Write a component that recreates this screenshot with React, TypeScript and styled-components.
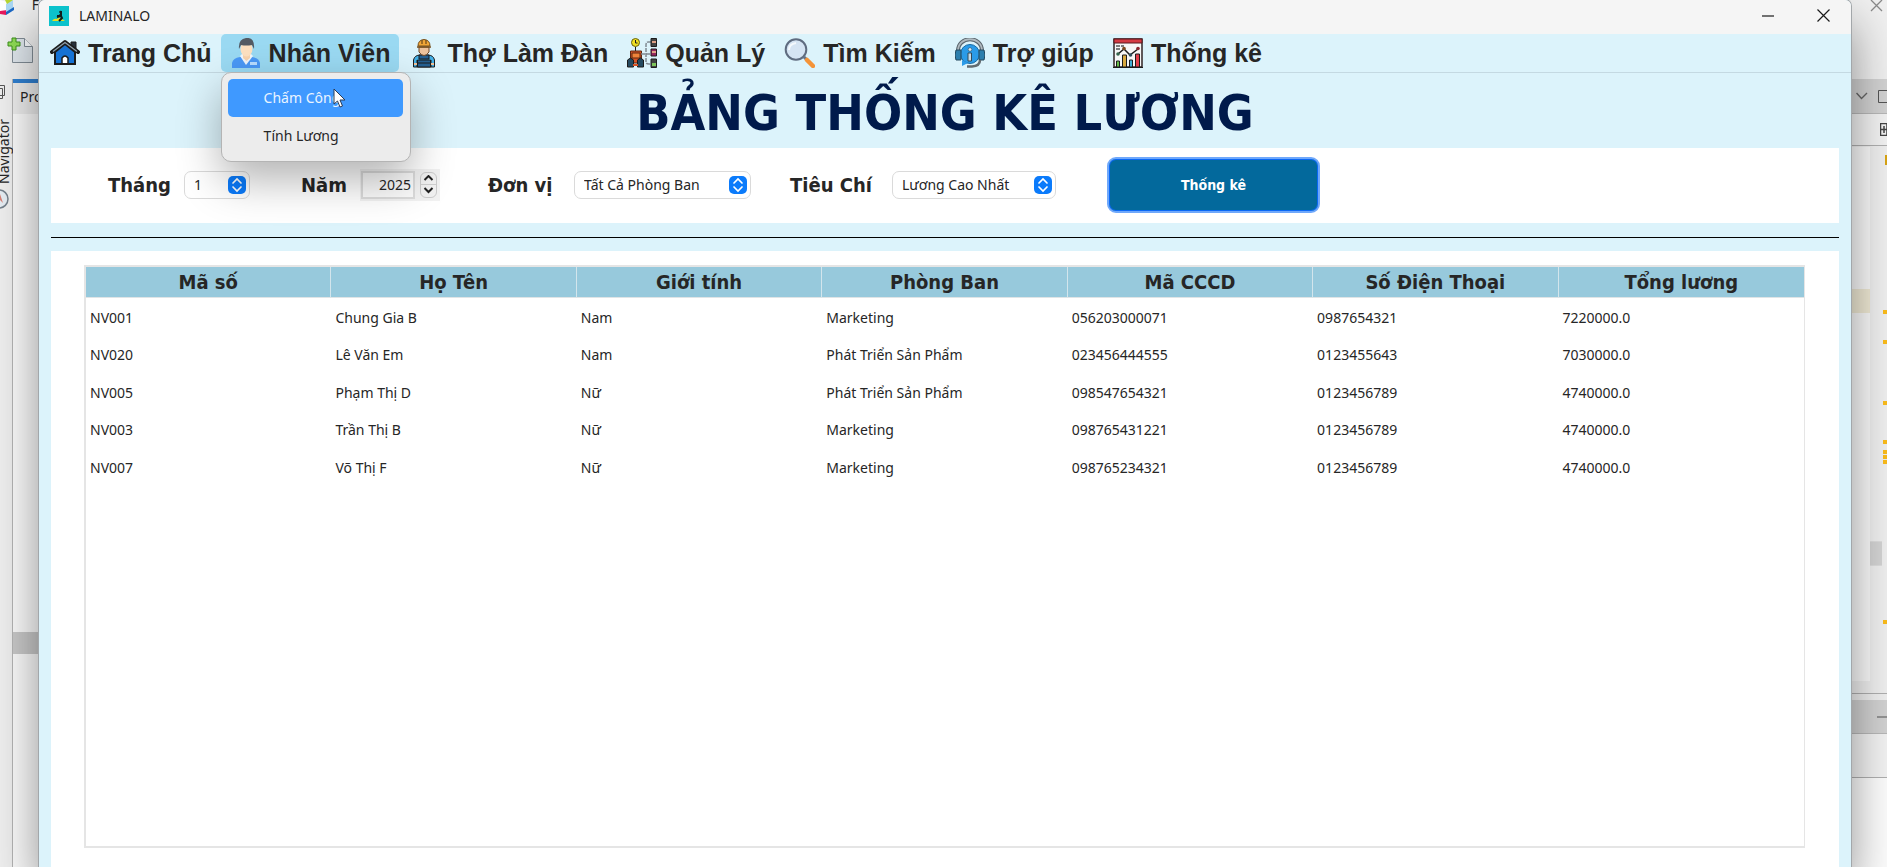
import React from 'react';
import styled, { createGlobalStyle } from 'styled-components';

const UI = `"Noto Sans", "Open Sans", sans-serif`;
const BOLD = `Tahoma, "DejaVu Sans Condensed", "Noto Sans", sans-serif`;
const MENU = `"Liberation Sans", Arial, sans-serif`;

const Global = createGlobalStyle`
  * { box-sizing: border-box; }
  body { margin: 0; background: #ececec; font-family: ${UI}; color: #262626; }
  button, input, select { font: inherit; color: inherit; margin: 0; }
`;

const Desktop = styled.div`
  display: grid;
  grid-template-columns: 39px minmax(0, 1fr) 36px;
  height: 100vh;
  overflow: hidden;
`;

/* ---------- IDE behind the window ---------- */
const LeftPane = styled.aside`
  display: grid;
  grid-template-rows: 79px minmax(0, 1fr);
  min-width: 0;
  background: #efefef;
`;
const IdeToolbar = styled.div`
  display: flex;
  flex-direction: column;
  justify-content: space-between;
  height: 67px;
  white-space: nowrap;
`;
const IdeTop = styled.div`
  display: flex;
  justify-content: space-between;
  height: 16px;
  font-size: 14px;
  line-height: 10px;
`;
const IdeBody = styled.div`
  display: grid;
  grid-template-columns: 12px minmax(0, 1fr);
`;
const Rail = styled.div`
  display: flex;
  flex-direction: column;
  align-items: flex-start;
  padding-top: 6px;
`;
const RailLabel = styled.span`
  writing-mode: vertical-rl;
  transform: rotate(180deg);
  width: 8px;
  height: 67px;
  margin: 18px 0 5px;
  font-size: 14px;
  line-height: 8px;
`;
const Projects = styled.div`
  display: flex;
  flex-direction: column;
  border-left: 1px solid #b4b4b4;
  background: #fbfbfb;
`;
const ProjectsTab = styled.div`
  height: 35px;
  padding-left: 7px;
  border-top: 4px solid #2f7fd0;
  background: #ececec;
  font-size: 14px;
  line-height: 28px;
  white-space: nowrap;
  overflow: hidden;
`;
const ScrollBlock = styled.div`
  height: 22px;
  margin-top: 518px;
  background: #c9c9c9;
`;

const RightPane = styled.aside`
  display: grid;
  grid-template-rows: 79px 35px 32px minmax(0, 1fr) 7px 34px 44px 89px;
  background: #f0f0f0;
`;
const RightTop = styled.div`
  padding-left: 19px;
  overflow: hidden;
  svg { display: block; }
`;
const PaneHeader = styled.div`
  display: flex;
  align-items: center;
  gap: 10px;
  padding-left: 5px;
  overflow: hidden;
  background: #d2d2d2;
  border-bottom: 1px solid #b8b8b8;
  svg { flex: none; }
`;
const PaneTools = styled.div`
  display: flex;
  align-items: center;
  justify-content: flex-end;
  overflow: hidden;
  background: #f3f3f3;
  border-bottom: 1px solid #b0b0b0;
`;
const Editor = styled.div`
  display: grid;
  grid-template-columns: 19px 12px 5px;
  padding-top: 1px;
`;
const EditorText = styled.div`
  margin-bottom: 12px;
  padding-top: 142px;
  background: #fbfbfb;
`;
const CurrentLine = styled.div`
  height: 24px;
  background: #f1ebd6;
`;
const EditorScroll = styled.div`
  padding-top: 394px;
`;
const EditorThumb = styled.div`
  height: 25px;
  background: #d4d4d4;
  border: solid #dedede;
  border-width: 1px 0;
`;
const Stripe = styled.div`
  position: relative;
`;
const Mark = styled.i`
  position: absolute;
  right: 0;
  width: 4px;
  height: 4px;
  background: #fbbc1a;
`;
const StatusMark = styled.i`
  position: absolute;
  right: 0;
  top: 8px;
  width: 2px;
  height: 10px;
  background: #d9a514;
`;
const Gap = styled.div`
  border-top: 1px solid #b0b0b0;
`;
const OutputHeader = styled(PaneHeader)`
  justify-content: flex-end;
`;
const OutputTools = styled(PaneTools)``;
const OutputBody = styled.div`
  background: #fdfdfd;
`;

/* ---------- application window ---------- */
const Window = styled.main`
  position: relative;
  z-index: 1;
  display: flex;
  flex-direction: column;
  min-width: 0;
  background: #dcf3fb;
  border-radius: 6px 6px 0 0;
  box-shadow: 0 0 0 1px #a3a7aa, 0 24px 48px rgba(0, 0, 0, 0.44);
`;
const TitleBar = styled.header`
  display: flex;
  align-items: center;
  gap: 10px;
  height: 34px;
  padding: 0 7px 3px 10px;
  border-radius: 6px 6px 0 0;
  background: #f5f5f5;
  font-size: 14px;
`;
const AppName = styled.span`
  flex: 1;
`;
const WindowButton = styled.button`
  display: grid;
  place-items: center;
  width: 42px;
  height: 30px;
  margin-left: 3px;
  padding: 0;
  border: 0;
  background: none;
`;
const MenuBar = styled.nav`
  display: flex;
  height: 39px;
  padding-left: 1px;
  border-bottom: 1px solid #c4d9e2;
`;
const MenuSlot = styled.div`
  position: relative;
`;
const MenuButton = styled.button<{ $open?: boolean }>`
  display: flex;
  align-items: center;
  gap: 8px;
  height: 38px;
  padding: 0 9px 0 10px;
  border: 0;
  border-radius: 5px;
  background: ${p => (p.$open ? '#9ad9f2' : 'transparent')};
  font-family: ${MENU};
  font-size: 25px;
  font-weight: 700;
  line-height: 28px;
  white-space: nowrap;
  svg { flex: none; }
`;
const Popup = styled.div`
  position: absolute;
  z-index: 2;
  top: 38px;
  left: 0;
  width: 190px;
  height: 90px;
  padding: 6px 7px 6px 6px;
  border: 1px solid #b4b4b4;
  border-radius: 10px;
  background: #ececec;
  box-shadow: 0 18px 44px rgba(0, 0, 0, 0.3);
`;
const PopupItem = styled.button<{ $active?: boolean }>`
  display: block;
  width: 100%;
  height: 38px;
  padding: 0 36px 1px;
  border: 0;
  border-radius: 5px;
  background: ${p => (p.$active ? '#3f99ff' : 'transparent')};
  color: ${p => (p.$active ? '#eaf4ff' : '#262626')};
  font-size: 14px;
  text-align: left;
`;
const Pointer = styled.svg`
  position: absolute;
  left: 111px;
  top: 15px;
`;
const Heading = styled.h1`
  height: 75px;
  margin: 0;
  color: #001a4b;
  font-family: ${BOLD};
  font-size: 50px;
  font-weight: 700;
  line-height: 80px;
  text-align: center;
`;
const Filters = styled.form`
  display: grid;
  grid-template-columns: 193px 187px 302px 317px 213px;
  align-items: center;
  height: 75px;
  margin: 0 12px;
  padding: 0 0 2px 57px;
  background: #fff;
`;
const Field = styled.div<{ $label: number }>`
  display: grid;
  grid-template-columns: ${p => p.$label}px auto;
  justify-content: start;
  align-items: center;
`;
const Label = styled.label`
  font-family: ${BOLD};
  font-size: 20px;
  font-weight: 700;
  line-height: 28px;
  white-space: nowrap;
`;
const SelectBox = styled.div<{ $width: number }>`
  position: relative;
  width: ${p => p.$width}px;
  svg { position: absolute; right: 4px; top: 5px; pointer-events: none; }
`;
const Select = styled.select`
  appearance: none;
  display: block;
  width: 100%;
  height: 28px;
  padding: 0 24px 0 9px;
  border: 1px solid #dadada;
  border-radius: 7px;
  background: transparent;
  font-size: 14px;
`;
const Spinner = styled.div`
  display: flex;
  align-items: center;
  gap: 5px;
  width: 80px;
  height: 32px;
  padding: 0 3px 0 1px;
  background: rgba(0, 0, 0, 0.05);
`;
const YearInput = styled.input`
  width: 54px;
  height: 28px;
  padding: 0 2px 0 0;
  border: 2px solid #dcdcdc;
  background: #fbfbfb;
  font-size: 14px;
  text-align: right;
`;
const Steps = styled.div`
  display: grid;
  width: 17px;
  height: 26px;
  border: 1px solid #cccccc;
  border-radius: 6px;
  background: #f2f2f2;
`;
const Step = styled.button`
  display: grid;
  place-items: center;
  padding: 0;
  border: 0;
  background: none;
  & + & { border-top: 1px solid #d0d0d0; }
`;
const Submit = styled.button`
  height: 56px;
  border: 2px solid #6fa8fb;
  border-radius: 9px;
  background: #03699c;
  box-shadow: inset 0 0 0 1px #0a68f5;
  color: #fff;
  font-family: ${BOLD};
  font-size: 14px;
  font-weight: 700;
`;
const Divider = styled.hr`
  width: calc(100% - 24px);
  height: 1px;
  margin: 14px 12px 13px;
  border: 0;
  background: #000;
`;
const TablePanel = styled.section`
  flex: 1;
  display: flex;
  margin: 0 12px;
  padding: 14px 34px 19px 33px;
  background: #fff;
`;
const TableFrame = styled.div`
  flex: 1;
  border: solid #e5e5e5;
  border-width: 2px 1px 2px 2px;
`;
const Table = styled.table`
  width: 100%;
  border-collapse: separate;
  border-spacing: 0;
  table-layout: fixed;
`;
const Th = styled.th`
  height: 31px;
  padding: 0;
  border-bottom: 1px solid #dfe4e6;
  border-right: 1px solid #d3e5ec;
  background: #97c9dc;
  font-family: ${BOLD};
  font-size: 20px;
  line-height: 28px;
  &:last-child { border-right: 0; }
`;
const Row = styled.tr`
  height: 37px;
  &:nth-child(odd) { height: 38px; }
`;
const Td = styled.td`
  padding: 1px 4px 0;
  font-size: 14px;
  line-height: 20px;
  white-space: nowrap;
`;

/* ---------- drawings ---------- */
const K = '#1c1c1c';

const HomeIcon = () => (
  <svg width="30" height="30" viewBox="0 0 30 30">
    <path d="M21 4h5v8l-5-4z" fill="#27313b" stroke={K} />
    <path d="M5 14v12h20V14l-10-8z" fill="#1672d4" stroke={K} strokeWidth="2" />
    <path d="M2 14 15 4l13 10" fill="none" stroke={K} strokeWidth="4" strokeLinecap="round" strokeLinejoin="round" />
    <path d="M3 13.500 15 4.500l12 9" fill="none" stroke="#8fa0ad" strokeWidth="1.200" />
    <path d="M12 26v-6q3-4 6 0v6z" fill="#fff" stroke={K} strokeWidth="1.500" />
    <path d="M4 26h22" stroke={K} strokeWidth="2" />
  </svg>
);
const StaffIcon = () => (
  <svg width="30" height="30" viewBox="0 0 30 30">
    <path d="M1 30v-5q1-5 8-6h12q7 1 8 6v5z" fill="#4a98f5" />
    <path d="m9 18 6 9 7-9-2-2h-9z" fill="#eef5fc" />
    <path d="M12 14h7v6l-3.500 3L12 20z" fill="#f8d3ad" />
    <ellipse cx="15.500" cy="11" rx="6" ry="7.500" fill="#fde0c0" />
    <path d="M8 11Q7 1 15 0q9-1 8 11l-2-4q-6 1-11 0z" fill="#535a63" />
    <path d="M19 24h7v3h-7z" fill="#b9ddff" />
  </svg>
);
const CraftIcon = () => (
  <svg width="30" height="30" viewBox="0 0 30 30">
    <path d="M4.500 29v-7q1-5 7-5h7q6 0 7 5v7z" fill="#42afe6" stroke={K} />
    <path d="M10 17h10v4H10zM8.500 22h13v7h-13z" fill="#255f91" stroke={K} />
    <path d="M8.500 25h13M8 22v7M22 22v7" stroke={K} />
    <path d="M10 9h10v5q-5 7-10 0z" fill="#edc29c" stroke="#714929" />
    <path d="M9 8q0-6 6-6.500Q21 2 21 8z" fill="#f1a637" stroke="#754e1b" />
    <path d="M8 9h14M13 2v4M17 2v4" stroke="#754e1b" strokeWidth="1.300" />
    <path d="M5 26h3M22 26h3" stroke="#edc29c" strokeWidth="2" />
  </svg>
);
const ManageIcon = () => (
  <svg width="30" height="30" viewBox="0 0 30 30">
    <circle cx="8.500" cy="4.500" r="4" fill="#efdf22" stroke="#66600d" />
    <path d="M8.500 2v3h2M8.500 9v4" stroke={K} fill="none" />
    <path d="M3.500 13h11v12h-11z" fill="#d65224" stroke="#5f2811" />
    <path d="M5 15h8v5H5z" fill="#f0843a" stroke="#5f2811" />
    <path d="M.5 29v-7l3-2 3 2v7zM10.500 29v-7l3-2 3 2v7z" fill="#254a60" stroke={K} />
    <path d="M6 27h5" stroke="#d65224" strokeWidth="2" />
    <path d="M14 16h9M24 4h-3q-2 0-2 3v17q0 2 3 2h2" fill="none" stroke="#808a92" strokeWidth="1.500" strokeDasharray="4 1" />
    <path d="M24 .5h5.500v8H24z" fill="#444" stroke={K} />
    <path d="M24 11h5.500v7H24z" fill="#94275e" stroke={K} />
    <path d="M24 21h5.500v8.500H24z" fill="#444" stroke={K} />
    <path d="M25 4h4M25 14h4" stroke="#dfa185" strokeWidth="2" />
    <path d="M25 25h4v3h-4z" fill="#7ec45a" />
  </svg>
);
const SearchIcon = () => (
  <svg width="31" height="30" viewBox="0 0 31 30">
    <path d="m20 19 5 5" stroke="#65748b" strokeWidth="3" />
    <path d="m23 22 6 6" stroke="#f49338" strokeWidth="4.500" strokeLinecap="round" />
    <circle cx="12" cy="11.500" r="10.300" fill="#d5e4f3" stroke="#5f6c80" strokeWidth="2" />
    <path d="M5 12q0-6 7-7" stroke="#f4f9fd" strokeWidth="2" fill="none" />
  </svg>
);
const HelpIcon = () => (
  <svg width="30" height="30" viewBox="0 0 30 30">
    <path d="M3 14C2-3 28-3 27 14" fill="none" stroke="#5b666e" strokeWidth="4" />
    <path d="M3 14C2-3 28-3 27 14" fill="none" stroke="#b0bac0" strokeWidth="1.800" />
    <circle cx="15" cy="16" r="9.500" fill="#2b9be8" stroke="#176aa3" />
    <path d="M1 12h5v10H1q-2-5 0-10zM24 12h5q2 5 0 10h-5z" fill="#2d7fad" stroke="#254a60" />
    <path d="M7 22v6l6-3z" fill="#2b9be8" />
    <path d="M25 22q0 6-8 6.500h-5" fill="none" stroke="#626b70" strokeWidth="2.500" />
    <circle cx="15" cy="11.500" r="1.800" fill="#d9eefb" stroke="#354a58" strokeWidth=".6" />
    <path d="M13 15h3.500v8H13z" fill="#c5dbe8" stroke="#354a58" />
  </svg>
);
const ChartIcon = () => (
  <svg width="30" height="30" viewBox="0 0 30 30">
    <path d="M1 1h28v28H1z" fill="#f7f7f7" stroke="#302426" strokeWidth="1.500" />
    <path d="M1 1h28v4H1z" fill="#d53a43" stroke="#59191e" />
    <path d="M3 8h8M3 11h5" stroke="#555" strokeWidth="1.500" strokeDasharray="4 1" />
    <path d="M3.500 23h3v6h-3z" fill="#65bd4b" stroke={K} />
    <path d="M9.500 17h4v12h-4z" fill="#d8a93f" stroke={K} />
    <path d="M16.500 22h3v7h-3z" fill="#3faed6" stroke={K} />
    <path d="M22.500 16h4v13h-4z" fill="#e23d4a" stroke={K} />
    <path d="m5 16 6-5 6 6 8-6" fill="none" stroke={K} strokeWidth="1.500" />
    <circle cx="5" cy="16" r="1.800" fill="#37654d" />
    <circle cx="11" cy="10.500" r="1.800" fill="#7d4a20" />
    <circle cx="17.500" cy="17" r="1.800" fill="#30505e" />
    <circle cx="25" cy="10.500" r="1.800" fill="#8c2730" />
    <path d="M0 29.500h30" stroke={K} />
  </svg>
);
const LogoIcon = () => (
  <svg width="20" height="20" viewBox="0 0 20 20">
    <path d="M0 0h20v20H0z" fill="#0cc2cc" />
    <path d="M3 15q2-3 5-2l2-2 3 2 3 2z" fill="#e5df24" />
    <path d="M12 5v5l-4 1M11 8l2 4-3 3M8 10h3" stroke="#121c1c" strokeWidth="2" fill="none" />
    <circle cx="11.500" cy="6" r="1.300" fill="#121c1c" />
  </svg>
);
const Badge = () => (
  <svg width="18" height="18" viewBox="0 0 18 18" aria-hidden="true">
    <rect width="18" height="18" rx="5" fill="#0b7bfb" />
    <path d="m5 7 4-4 4 4M5 11l4 4 4-4" fill="none" stroke="#fff" strokeWidth="1.700" strokeLinecap="round" />
  </svg>
);
const Chevron = ({ up }: { up?: boolean }) => (
  <svg width="11" height="7" viewBox="0 0 11 7">
    <path d={up ? 'm1.500 5 4-4 4 4' : 'm1.500 1 4 4 4-4'} fill="none" stroke="#222" strokeWidth="2" />
  </svg>
);

const MENUS: { text: string; Icon: () => React.ReactElement; items?: string[] }[] = [
  { text: 'Trang Chủ', Icon: HomeIcon },
  { text: 'Nhân Viên', Icon: StaffIcon, items: ['Chấm Công', 'Tính Lương'] },
  { text: 'Thợ Làm Đàn', Icon: CraftIcon },
  { text: 'Quản Lý', Icon: ManageIcon },
  { text: 'Tìm Kiếm', Icon: SearchIcon },
  { text: 'Trợ giúp', Icon: HelpIcon },
  { text: 'Thống kê', Icon: ChartIcon },
];
const COLUMNS = ['Mã số', 'Họ Tên', 'Giới tính', 'Phòng Ban', 'Mã CCCD', 'Số Điện Thoại', 'Tổng lương'];
const ROWS = [
  ['NV001', 'Chung Gia B', 'Nam', 'Marketing', '056203000071', '0987654321', '7220000.0'],
  ['NV020', 'Lê Văn Em', 'Nam', 'Phát Triển Sản Phẩm', '023456444555', '0123455643', '7030000.0'],
  ['NV005', 'Phạm Thị D', 'Nữ', 'Phát Triển Sản Phẩm', '098547654321', '0123456789', '4740000.0'],
  ['NV003', 'Trần Thị B', 'Nữ', 'Marketing', '098765431221', '0123456789', '4740000.0'],
  ['NV007', 'Võ Thị F', 'Nữ', 'Marketing', '098765234321', '0123456789', '4740000.0'],
];
const WARNINGS = [163, 193, 254, 293, 303, 308, 313, 473];

function IdeLeft() {
  return (
    <LeftPane>
      <IdeToolbar>
        <IdeTop>
          <svg width="15" height="16" viewBox="0 0 15 16">
            <path d="m0 0 7 2v12l-7-3z" fill="#fff" />
            <path d="M0 11v3l6 1 1-5z" fill="#e5195c" />
            <path d="m6 4 7-4v10l-7 5z" fill="#a9d7f3" />
            <path d="m6 15 8-5V7l-8 5z" fill="#1c68c4" />
            <path d="M5 0h8l-6 4z" fill="#b6d531" />
          </svg>
          <span>F</span>
        </IdeTop>
        <svg width="34" height="30" viewBox="0 0 34 30">
          <path d="M12.500 1.500h12l8 8v16h-20z" fill="#dfe6ec" stroke="#818c95" />
          <path d="M24.500 1.500v8h8" fill="#f8fafc" stroke="#818c95" />
          <path d="M12 1h4v4h4v4h-4v4h-4V9H8V5h4z" fill="#8fdc55" stroke="#3c8f1c" />
        </svg>
      </IdeToolbar>
      <IdeBody>
        <Rail>
          <svg width="6" height="14" viewBox="0 0 6 14">
            <path d="M0 .5h4.500v10H0M0 3.500h2.500v10H0" fill="none" stroke="#555" />
          </svg>
          <RailLabel>Navigator</RailLabel>
          <svg width="9" height="22" viewBox="0 0 9 22">
            <circle cx="-1" cy="10" r="9" fill="#e6edf3" stroke="#75818c" strokeWidth="1.500" />
            <path d="m0 5 3 9-5-5z" fill="#d88378" />
          </svg>
        </Rail>
        <Projects>
          <ProjectsTab>Projects</ProjectsTab>
          <ScrollBlock />
        </Projects>
      </IdeBody>
    </LeftPane>
  );
}

function IdeRight() {
  return (
    <RightPane>
      <RightTop>
        <svg width="14" height="12" viewBox="0 0 14 12">
          <path d="M1 0 12 11M1 11 12 0" stroke="#8a8a8a" strokeWidth="1.300" />
        </svg>
      </RightTop>
      <PaneHeader>
        <svg width="12" height="8" viewBox="0 0 12 8">
          <path d="m.5 1 5 5.500L11 1" fill="none" stroke="#666" strokeWidth="1.400" />
        </svg>
        <svg width="13" height="13" viewBox="0 0 13 13">
          <path d="M.5.5h12v12H.5z" fill="none" stroke="#555" />
        </svg>
      </PaneHeader>
      <PaneTools>
        <svg width="7" height="13" viewBox="0 0 7 13">
          <path d="M.5.5H7v12H.5zM.5 6.500H7M4 3v7" fill="none" stroke="#444" strokeWidth="1.500" />
        </svg>
      </PaneTools>
      <Editor>
        <EditorText>
          <CurrentLine />
        </EditorText>
        <EditorScroll>
          <EditorThumb />
        </EditorScroll>
        <Stripe>
          <StatusMark />
          {WARNINGS.map(y => (
            <Mark key={y} style={{ top: y }} />
          ))}
        </Stripe>
      </Editor>
      <Gap />
      <OutputHeader>
        <svg width="10" height="2" viewBox="0 0 10 2">
          <path d="M0 1h10" stroke="#555" />
        </svg>
      </OutputHeader>
      <OutputTools />
      <OutputBody />
    </RightPane>
  );
}

export default function App() {
  return (
    <Desktop>
      <Global />
      <IdeLeft />
      <Window>
        <TitleBar>
          <LogoIcon />
          <AppName>LAMINALO</AppName>
          <WindowButton aria-label="Minimize">
            <svg width="12" height="2" viewBox="0 0 12 2">
              <path d="M0 1h12" stroke="#1a1a1a" strokeWidth="1.200" />
            </svg>
          </WindowButton>
          <WindowButton aria-label="Close">
            <svg width="13" height="13" viewBox="0 0 13 13">
              <path d="m.5.5 12 12M.5 12.500l12-12" stroke="#1a1a1a" strokeWidth="1.200" />
            </svg>
          </WindowButton>
        </TitleBar>
        <MenuBar>
          {MENUS.map(({ text, Icon, items }) => (
            <MenuSlot key={text}>
              <MenuButton $open={!!items}>
                <Icon />
                {text}
              </MenuButton>
              {items && (
                <Popup>
                  {items.map((item, i) => (
                    <PopupItem key={item} $active={i === 0}>
                      {item}
                    </PopupItem>
                  ))}
                  <Pointer width="13" height="20" viewBox="0 0 13 20">
                    <path d="M1 1v15l3.500-3 2.500 6 2.500-1-2.500-6h5z" fill="#fff" stroke="#2b3b55" />
                  </Pointer>
                </Popup>
              )}
            </MenuSlot>
          ))}
        </MenuBar>
        <Heading>BẢNG THỐNG KÊ LƯƠNG</Heading>
        <Filters onSubmit={e => e.preventDefault()}>
          <Field $label={76}>
            <Label htmlFor="month">Tháng</Label>
            <SelectBox $width={66}>
              <Select id="month">
                <option>1</option>
              </Select>
              <Badge />
            </SelectBox>
          </Field>
          <Field $label={59}>
            <Label htmlFor="year">Năm</Label>
            <Spinner>
              <YearInput id="year" defaultValue="2025" />
              <Steps>
                <Step type="button" aria-label="Increase year">
                  <Chevron up />
                </Step>
                <Step type="button" aria-label="Decrease year">
                  <Chevron />
                </Step>
              </Steps>
            </Spinner>
          </Field>
          <Field $label={86}>
            <Label htmlFor="unit">Đơn vị</Label>
            <SelectBox $width={177}>
              <Select id="unit">
                <option>Tất Cả Phòng Ban</option>
              </Select>
              <Badge />
            </SelectBox>
          </Field>
          <Field $label={102}>
            <Label htmlFor="criterion">Tiêu Chí</Label>
            <SelectBox $width={164}>
              <Select id="criterion">
                <option>Lương Cao Nhất</option>
              </Select>
              <Badge />
            </SelectBox>
          </Field>
          <Submit>Thống kê</Submit>
        </Filters>
        <Divider />
        <TablePanel>
          <TableFrame>
            <Table>
              <thead>
                <tr>
                  {COLUMNS.map(c => (
                    <Th key={c} scope="col">
                      {c}
                    </Th>
                  ))}
                </tr>
              </thead>
              <tbody>
                {ROWS.map(r => (
                  <Row key={r[0]}>
                    {r.map((v, i) => (
                      <Td key={i}>{v}</Td>
                    ))}
                  </Row>
                ))}
              </tbody>
            </Table>
          </TableFrame>
        </TablePanel>
      </Window>
      <IdeRight />
    </Desktop>
  );
}
